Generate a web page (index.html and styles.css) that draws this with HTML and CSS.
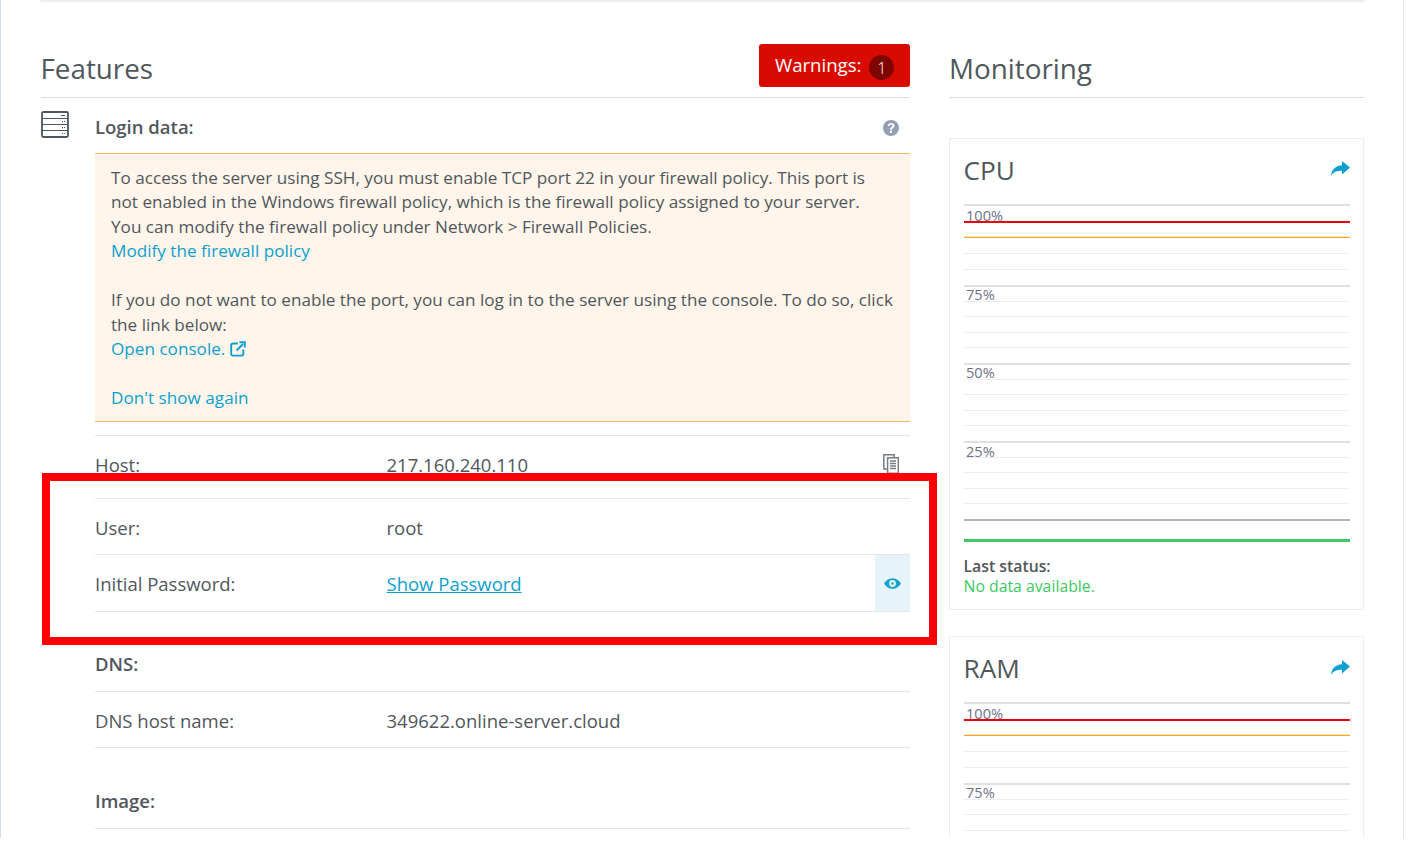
FILE: index.html
```html
<!DOCTYPE html>
<html lang="en">
<head>
<meta charset="utf-8">
<title>Server features</title>
<link rel="stylesheet" href="styles.css">
</head>
<body>
<div class="shell">
  <div class="topcard"></div>
  <div class="columns">
    <main class="features">
      <header class="section-head">
        <h2 class="features-title">Features</h2>
        <div class="warnings">Warnings: <span class="count">1</span></div>
      </header>
      <div class="feature-body">
        <svg class="server-icon" viewBox="0 0 28 27" width="28" height="27" aria-hidden="true">
          <rect x="1" y="1" width="26" height="25" rx="1.5" fill="none" stroke="#50575c" stroke-width="1.8"/>
          <path d="M1 7.500h26M1 13.500h26M1 19.500h26" stroke="#50575c" stroke-width="1.100"/>
          <path d="M20 4.500h4M21 10.500h1M23 10.500h1M21 16.500h1M23 16.500h1M21 22.500h1M23 22.500h1" stroke="#50575c" stroke-width="1"/>
        </svg>
        <div class="feature-main">
          <div class="login-head">
            <strong>Login data:</strong>
            <svg class="help" viewBox="0 0 16 16" width="16" height="16" aria-hidden="true">
              <circle cx="8" cy="8" r="8" fill="#959fb3"/>
              <path d="M4.700 6C4.900 4 6.300 2.900 8.100 2.900c1.900 0 3.400 1.200 3.400 2.900 0 1.300-.8 2-1.600 2.500-.7.400-.9.700-.9 1.400H6.900c0-1.300.4-1.900 1.300-2.500.8-.5 1.200-.9 1.200-1.500 0-.7-.6-1.100-1.300-1.100-.8 0-1.300.5-1.400 1.300z" fill="#fff"/>
              <rect x="6.900" y="10.800" width="2.100" height="2.200" fill="#fff"/>
            </svg>
          </div>
          <div class="notice">
            <p>To access the server using SSH, you must enable TCP port 22 in your firewall policy. This port is not enabled in the Windows firewall policy, which is the firewall policy assigned to your server.<br>You can modify the firewall policy under Network &gt; Firewall Policies.<br><a href="#">Modify the firewall policy</a></p>
            <p>If you do not want to enable the port, you can log in to the server using the console. To do so, click the link below:<br><a href="#">Open console.
              <svg class="ext" viewBox="0 0 16 16" width="16" height="16" aria-hidden="true">
                <path d="M8 2.500H3A1.800 1.800 0 0 0 1.200 4.300v8.500A1.800 1.800 0 0 0 3 14.600h8.500a1.800 1.800 0 0 0 1.800-1.800V8.500" fill="none" stroke="#0d9fd0" stroke-width="1.900"/>
                <path d="M6.500 9.500 13 3M9.500 1.200h5.300v5.300" fill="none" stroke="#0d9fd0" stroke-width="1.900"/>
              </svg></a></p>
            <p class="last"><a href="#">Don't show again</a></p>
          </div>
          <div class="rows">
            <div class="row host">
              <span class="key">Host:</span><span class="val">217.160.240.110</span>
              <svg class="copy" viewBox="0 0 16 20" width="16" height="20" aria-hidden="true">
                <path d="M4 15H.8V.8h10.400V3.500" fill="none" stroke="#777d82" stroke-width="1.500"/>
                <rect x="4.600" y="3.800" width="10.700" height="15.500" fill="#fff" stroke="#777d82" stroke-width="1.500"/>
                <path d="M7 7h6M7 9.500h6M7 12h6M7 14.500h6" stroke="#777d82" stroke-width="1.300"/>
              </svg>
            </div>
            <div class="row">
              <span class="key">User:</span><span class="val">root</span>
            </div>
            <div class="row password">
              <span class="key">Initial Password:</span><span class="val"><a class="under" href="#">Show Password</a></span>
              <span class="eye-cell">
                <svg viewBox="0 0 16 10" width="17" height="11" aria-hidden="true">
                  <path fill-rule="evenodd" d="M8 0c3.500 0 6.400 2.200 8 5-1.600 2.800-4.500 5-8 5S1.600 7.800 0 5c1.600-2.800 4.500-5 8-5zm0 1.800a3.200 3.200 0 1 0 0 6.400 3.200 3.200 0 0 0 0-6.400zM8 3.800a1.200 1.200 0 1 1 0 2.400 1.200 1.200 0 0 1 0-2.400z" fill="#14a0d0"/>
                </svg>
              </span>
            </div>
          </div>
          <div class="sub-head dns">DNS:</div>
          <div class="row">
            <span class="key">DNS host name:</span><span class="val">349622.online-server.cloud</span>
          </div>
          <div class="sub-head image">Image:</div>
        </div>
      </div>
    </main>
    <aside class="monitoring">
      <header class="section-head"><h2>Monitoring</h2></header>
      <section class="card cpu">
        <div class="card-head"><h3>CPU</h3>
          <svg class="share" viewBox="0 0 19 16" width="19" height="15" preserveAspectRatio="none" aria-hidden="true"><path d="M11 0l8 7-8 7.500V10.500C6 10.500 2.500 11.500 0 16c.3-6.500 4.500-11 11-11.500z" fill="#0d9fd0"/></svg>
        </div>
        <div class="chart">
          <div class="grid">
            <i class="major"></i><i class="red"></i><i class="orange"></i><i></i><i></i>
            <i class="major"></i><i></i><i></i><i></i><i></i>
            <i class="major"></i><i></i><i></i><i></i><i></i>
            <i class="major"></i><i></i><i></i><i></i><i></i>
            <i class="base"></i>
          </div>
          <span class="tick t100">100%</span><span class="tick t75">75%</span><span class="tick t50">50%</span><span class="tick t25">25%</span>
        </div>
        <div class="bar"></div>
        <div class="status"><strong>Last status:</strong><span>No data available.</span></div>
      </section>
      <section class="card ram">
        <div class="card-head"><h3>RAM</h3>
          <svg class="share" viewBox="0 0 19 16" width="19" height="15" preserveAspectRatio="none" aria-hidden="true"><path d="M11 0l8 7-8 7.500V10.500C6 10.500 2.500 11.500 0 16c.3-6.500 4.500-11 11-11.500z" fill="#0d9fd0"/></svg>
        </div>
        <div class="chart">
          <div class="grid">
            <i class="major"></i><i class="red"></i><i class="orange"></i><i></i><i></i>
            <i class="major"></i><i></i><i></i><i></i><i></i>
          </div>
          <span class="tick t100">100%</span><span class="tick t75">75%</span>
        </div>
      </section>
    </aside>
  </div>
  <div class="red-frame"></div>
</div>
</body>
</html>
```
FILE: styles.css
```css
* { box-sizing: border-box; }
html, body { margin: 0; height: 844px; overflow: hidden; background: #fff; }
body { font-family: "Open Sans", "Liberation Sans", sans-serif; font-size: 18.5px; color: #50575c; }
.shell { position: relative; width: 1404px; height: 838px; overflow: hidden; border-left: 1px solid #d5dfe9; border-right: 1px solid #e4e7ea; padding: 0 39px 0 40px; }
.topcard { height: 0; box-shadow: 0 0 3px 1px rgba(0,0,0,.16); }
.columns { display: flex; justify-content: space-between; padding-top: 44px; }
.features { width: 869px; }
.monitoring { width: 415px; }
.section-head { display: flex; justify-content: space-between; align-items: flex-start; height: 54px; border-bottom: 1px solid #dadcde; }
h2 { margin: 0; padding-top: 4px; font-size: 27.8px; line-height: 40px; font-weight: 400; color: #50575c; }
.features-title { margin-left: -.5px; }
.warnings { width: 151px; height: 43px; background: #d90b00; border-radius: 3px; color: #fff; font-size: 18.6px; line-height: 41px; padding-left: 16px; white-space: nowrap; }
.count { display: inline-block; width: 25px; height: 25px; margin-left: 3px; border-radius: 50%; background: #7f0500; text-align: center; font-size: 16px; font-weight: 300; line-height: 27px; vertical-align: -2px; }
.feature-body { display: flex; }
.server-icon { flex: none; margin: 13px 26px 0 0; }
.feature-main { flex: 1; min-width: 0; }
.login-head { display: flex; justify-content: space-between; align-items: center; height: 56px; padding: 2px 11px 0 0; border-bottom: 1px solid #f3b867; }
strong { font-weight: 600; }
.help { flex: none; margin-top: 2px; }
.notice { height: 268px; padding: 11.8px 15px 0 16px; background: #fff5ea; border-bottom: 1px solid #f3b867; font-size: 17.15px; line-height: 24.48px; }
.notice p { margin: 0 0 24.48px; }
.notice p.last { margin: 15.5px 0 0; }
a { color: #0d9fd0; text-decoration: none; }
a.under { text-decoration: underline; }
.ext { vertical-align: -2px; }
.rows { margin-top: 13px; border-top: 1px solid #e3e5e6; }
.row { display: flex; align-items: center; height: 56px; padding-top: 1px; border-bottom: 1px solid #e3e5e6; }
.row.host { height: 63px; padding: 0 0 6px; }
.key { width: 291.5px; flex: none; }
.val { flex: 1; }
.copy { flex: none; margin-right: 11px; }
.row.password { height: 57px; padding: 0; }
.eye-cell { flex: none; width: 35px; align-self: stretch; display: flex; align-items: center; justify-content: center; padding-top: 1px; background: #e6f4fa; }
.sub-head { font-weight: 600; display: flex; align-items: center; border-bottom: 1px solid #e3e5e6; height: 56px; }
.sub-head.dns { margin-top: 24px; }
.sub-head.image { margin-top: 26px; height: 55px; padding-bottom: 2px; }
.card { border: 1px solid #eceded; padding: 0 13px 0 14px; }
.card.cpu { margin-top: 40px; height: 472px; }
.card.ram { margin-top: 26px; height: 300px; }
.card-head { display: flex; justify-content: space-between; align-items: flex-start; height: 65px; }
h3 { margin: 0 0 0 -.5px; padding-top: 12px; font-size: 26.2px; line-height: 38px; font-weight: 400; color: #50575c; }
.share { margin-top: 22px; }
.ram .share { margin-top: 23px; }
.chart { position: relative; height: 318px; }
.grid { display: flex; flex-direction: column; }
.grid i { display: block; flex: none; height: 15.6px; border-top: 1px solid #eeeeee; }
.grid i:nth-child(-n+5) { height: 16px; }
.grid i:first-child { height: 17px; }
.grid i.major { border-top: 2px solid #e0e0e0; }
.grid i.red { border-top: 2px solid #e8000a; }
.grid i.orange { border-top: 1px solid #f5a623; box-shadow: 0 -1px 0 rgba(245,166,35,.3); }
.grid i.base { border-top: 2px solid #b4b4b4; height: 2px; }
.tick { position: absolute; left: 2px; font-size: 14.6px; line-height: 16px; color: #6c7286; }
.t100 { top: 3px; }
.t75 { top: 82px; }
.t50 { top: 160px; }
.t25 { top: 239px; }
.bar { height: 3px; margin-top: 17px; background: #3ec864; }
.status { display: flex; flex-direction: column; margin: 14px 0 0 -.5px; font-size: 15.8px; line-height: 20px; }
.status span { color: #3ec864; }
.ram .chart { height: 160px; }
.red-frame { position: absolute; left: 41px; top: 473px; width: 895px; height: 172px; border: 8px solid #ff0000; }
```
